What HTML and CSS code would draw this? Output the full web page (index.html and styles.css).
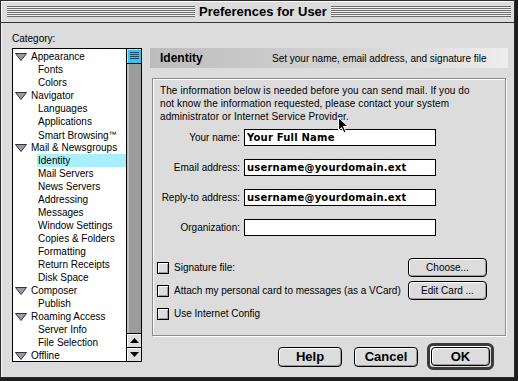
FILE: index.html
```html
<!DOCTYPE html>
<html lang="en">

<head>
  <meta charset="UTF-8" />
  <title>Preferences for User</title>
  <link rel="stylesheet" href="styles.css">
</head>

<body>
  <div class="window">
    <div class="titlebar">
      <span class="stripes stripes-left"></span>
      <h1>Preferences for User</h1>
      <span class="stripes"></span>
    </div>

    <div class="layout">
      <!-- arvore de categorias -->
      <div class="sidebar">
        <div class="cat-label">Category:</div>
        <div class="tree">
          <ul class="tree-list">
            <li class="parent"><svg class="twisty" viewBox="0 0 12 8"><polygon points="0.5,0.5 11.5,0.5 6,7.5" /></svg>Appearance</li>
            <li class="child">Fonts</li>
            <li class="child">Colors</li>
            <li class="parent"><svg class="twisty" viewBox="0 0 12 8"><polygon points="0.5,0.5 11.5,0.5 6,7.5" /></svg>Navigator</li>
            <li class="child">Languages</li>
            <li class="child">Applications</li>
            <li class="child">Smart Browsing<span class="tm">™</span></li>
            <li class="parent"><svg class="twisty" viewBox="0 0 12 8"><polygon points="0.5,0.5 11.5,0.5 6,7.5" /></svg>Mail &amp; Newsgroups</li>
            <li class="child selected">Identity</li>
            <li class="child">Mail Servers</li>
            <li class="child">News Servers</li>
            <li class="child">Addressing</li>
            <li class="child">Messages</li>
            <li class="child">Window Settings</li>
            <li class="child">Copies &amp; Folders</li>
            <li class="child">Formatting</li>
            <li class="child">Return Receipts</li>
            <li class="child">Disk Space</li>
            <li class="parent"><svg class="twisty" viewBox="0 0 12 8"><polygon points="0.5,0.5 11.5,0.5 6,7.5" /></svg>Composer</li>
            <li class="child">Publish</li>
            <li class="parent"><svg class="twisty" viewBox="0 0 12 8"><polygon points="0.5,0.5 11.5,0.5 6,7.5" /></svg>Roaming Access</li>
            <li class="child">Server Info</li>
            <li class="child">File Selection</li>
            <li class="parent"><svg class="twisty" viewBox="0 0 12 8"><polygon points="0.5,0.5 11.5,0.5 6,7.5" /></svg>Offline</li>
          </ul>
          <div class="scrollbar">
            <div class="thumb">
              <svg width="9" height="8" viewBox="0 0 9 8">
                <rect x="0" y="0" width="9" height="1" fill="#1a4a66" />
                <rect x="0" y="2" width="9" height="1" fill="#1a4a66" />
                <rect x="0" y="4" width="9" height="1" fill="#1a4a66" />
                <rect x="0" y="6" width="9" height="1" fill="#1a4a66" />
              </svg>
            </div>
            <div class="track"></div>
            <div class="arrow"><svg width="9" height="5" viewBox="0 0 9 5"><polygon points="4.5,0 9,5 0,5" fill="#000" /></svg></div>
            <div class="arrow"><svg width="9" height="5" viewBox="0 0 9 5"><polygon points="0,0 9,0 4.5,5" fill="#000" /></svg></div>
          </div>
        </div>
      </div>

      <!-- painel da direita -->
      <div class="main">
        <div class="panel-head">
          <span class="panel-title">Identity</span>
          <span>Set your name, email address, and signature file</span>
        </div>

        <div class="group">
          <p class="intro">The information below is needed before you can send mail. If you do<br>not know the information requested, please contact your system<br>administrator or Internet Service Provider.</p>

          <div class="fields">
            <div class="field">
              <label for="name">Your name:</label>
              <input id="name" type="text" value="Your Full Name" />
            </div>
            <div class="field">
              <label for="email">Email address:</label>
              <input id="email" type="text" value="username@yourdomain.ext" />
            </div>
            <div class="field">
              <label for="reply">Reply-to address:</label>
              <input id="reply" type="text" value="username@yourdomain.ext" />
            </div>
            <div class="field">
              <label for="org">Organization:</label>
              <input id="org" type="text" value="" />
            </div>
          </div>

          <div class="options">
            <div class="option">
              <span class="check"></span>
              <span>Signature file:</span>
              <button class="btn">Choose...</button>
            </div>
            <div class="option">
              <span class="check"></span>
              <span>Attach my personal card to messages (as a VCard)</span>
              <button class="btn">Edit Card ...</button>
            </div>
            <div class="option">
              <span class="check"></span>
              <span>Use Internet Config</span>
            </div>
          </div>
        </div>

        <div class="actions">
          <button class="btn btn-help">Help</button>
          <button class="btn btn-cancel">Cancel</button>
          <div class="default-ring"><button class="btn">OK</button></div>
        </div>
      </div>
    </div>
  </div>

  <svg class="cursor" width="11" height="17" viewBox="0 0 11 17">
    <polygon points="0.5,0.5 0.5,13.5 3.5,10.5 6,16 8,15 5.5,9.5 10,9.5" fill="#000" stroke="#fff" stroke-width="1" />
  </svg>
</body>

</html>
```

FILE: styles.css
```css
* {
  box-sizing: border-box;
}

body {
  margin: 0;
  background-color: #1c1c1c;
  font-family: "Liberation Sans", Arial, sans-serif;
  font-size: 10px;
  color: #000;
  position: relative;
}

.window {
  width: 515px;
  height: 378px;
  background-color: #dcdcdc;
  border: 1px solid #2a2a2a;
  display: flex;
  flex-direction: column;
}

/* barra de titulo listrada */
.titlebar {
  height: 22px;
  display: flex;
  align-items: center;
  padding: 0 3px 0 6px;
  border-bottom: 1px solid #333;
  box-shadow: inset 1px 1px 0 #fff;
}

.stripes {
  flex: 1;
  height: 11px;
  background: repeating-linear-gradient(to bottom, #6c6c6c 0 1px, #f2f2f2 1px 2px);
}

.stripes-left {
  flex: 0 0 188px;
}

.titlebar h1 {
  margin: 0;
  padding: 0 4px;
  font-size: 13px;
  font-weight: bold;
  line-height: 20px;
}

.layout {
  flex: 1;
  display: flex;
  padding: 9px 0 0 11px;
  box-shadow: inset 1px 0 0 #f4f4f4;
}

.sidebar {
  width: 130px;
}

.cat-label {
  height: 16px;
  line-height: 14px;
}

.tree {
  height: 314px;
  border: 1px solid #000;
  background-color: #fff;
  display: flex;
}

.tree-list {
  flex: 1;
  list-style: none;
  margin: 0;
  padding: 1px 0 0;
  overflow: hidden;
}

.tree-list li {
  height: 13px;
  line-height: 13px;
  white-space: nowrap;
}

.tree-list .parent {
  display: flex;
  align-items: center;
  padding-left: 2px;
}

.twisty {
  width: 12px;
  height: 8px;
  margin-right: 4px;
  fill: #9a9aa8;
  stroke: #333;
  stroke-width: 1;
}

.tree-list .child {
  margin-left: 24px;
  padding-left: 1px;
}

.tree-list .selected {
  background-color: #a8f0ff;
}

.tm {
  font-size: 8px;
  vertical-align: 2px;
}

.scrollbar {
  width: 15px;
  border-left: 1px solid #000;
  display: flex;
  flex-direction: column;
}

.thumb {
  height: 15px;
  background-color: #38c4ee;
  border-bottom: 1px solid #000;
  box-shadow: inset 1px 1px 0 #9fe8ff;
  display: flex;
  align-items: center;
  justify-content: center;
}

.track {
  flex: 1;
  background: linear-gradient(to right, #bdbdbd 0 2px, #9c9c9c 2px);
}

.arrow {
  height: 14px;
  border-top: 1px solid #000;
  background-color: #dedede;
  box-shadow: inset 1px 1px 0 #fff;
  display: flex;
  align-items: center;
  justify-content: center;
}

/* painel principal */
.main {
  width: 358px;
  margin-left: 8px;
  padding-top: 16px;
  display: flex;
  flex-direction: column;
}

.panel-head {
  height: 20px;
  display: flex;
  align-items: center;
  padding-left: 10px;
  background: linear-gradient(to right, #bcbcbc, #d4d4d4 55%, #ededed);
}

.panel-title {
  width: 112px;
  font-size: 12px;
  font-weight: bold;
}

.group {
  margin: 10px 2px 0;
  height: 258px;
  border: 1px solid #8c8c8c;
  box-shadow: 1px 1px 0 #fff, inset 1px 1px 0 #fff;
  padding: 5px 0 0 7px;
}

.intro {
  margin: 0;
  line-height: 13px;
  letter-spacing: 0.1px;
}

.fields {
  margin-top: 6px;
  display: flex;
  flex-direction: column;
  gap: 13px;
}

.field {
  height: 17px;
  display: flex;
  align-items: center;
}

.field label {
  width: 81px;
  padding-right: 1px;
  text-align: right;
}

.field input {
  width: 192px;
  height: 17px;
  margin: 0 0 0 3px;
  padding: 0 2px;
  border: 1px solid #000;
  background-color: #fff;
  font-family: "DejaVu Sans", sans-serif;
  font-weight: bold;
  font-size: 10px;
  letter-spacing: 0.2px;
  color: #000;
  outline: none;
}

.options {
  margin: 22px 18px 0 -3px;
  display: flex;
  flex-direction: column;
  gap: 4px;
}

.option {
  height: 19px;
  display: flex;
  align-items: center;
}

.check {
  flex: none;
  width: 12px;
  height: 12px;
  margin-right: 5px;
  border: 1px solid #000;
  background-color: #dcdcdc;
  box-shadow: inset 1px 1px 0 #fff, inset -1px -1px 0 #9a9a9a;
}

.btn {
  border: 1px solid #000;
  border-radius: 4px;
  background-color: #dcdcdc;
  box-shadow: inset 1px 1px 0 #fff, inset -1px -1px 0 #9a9a9a;
  font-family: "Liberation Sans", Arial, sans-serif;
  font-size: 10px;
  color: #000;
  padding: 0;
}

.option .btn {
  margin-left: auto;
  width: 79px;
  height: 19px;
}

/* botoes de baixo */
.actions {
  margin-top: 7px;
  height: 27px;
  display: flex;
  align-items: center;
  justify-content: flex-end;
  padding-right: 14px;
}

.actions .btn {
  width: 64px;
  height: 20px;
  font-size: 13px;
  font-weight: bold;
}

.btn-help {
  margin-right: 12px;
}

.btn-cancel {
  margin-right: 9px;
}

.default-ring {
  width: 67px;
  height: 27px;
  border: 3px solid #3a3a3a;
  border-radius: 6px;
  padding: 1px;
  display: flex;
  box-shadow: inset 1px 1px 0 #fff;
}

.default-ring .btn {
  width: 100%;
  height: 100%;
}

.cursor {
  position: absolute;
  left: 338px;
  top: 117px;
}
```
